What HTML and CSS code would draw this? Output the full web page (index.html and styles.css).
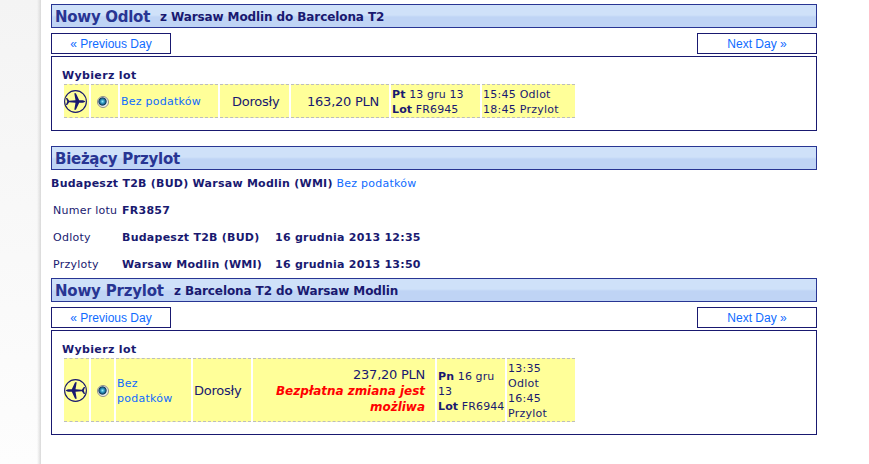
FILE: index.html
```html
<!DOCTYPE html>
<html lang="pl">
<head>
<meta charset="utf-8">
<title>Nowy lot</title>
<link rel="stylesheet" href="styles.css">
</head>
<body>
<svg class="defs" width="0" height="0">
  <symbol id="plane" viewBox="0 0 23 23">
    <circle cx="11.5" cy="11.5" r="10.9" fill="none" stroke="currentColor" stroke-width="1.1"/>
    <path fill="currentColor" d="M21.5 11.5 C20.5 10.5 19 10.2 17.5 10.2 H15.2 L11.9 3.3 H10.3 L11.5 10.2 L5.2 10.8 L3.2 8 H1.9 L3.2 11.5 L1.9 15 H3.2 L5.2 12.2 L11.5 12.8 L10.3 19.7 H11.9 L15.2 12.8 H17.5 C19 12.8 20.5 12.5 21.5 11.5 Z"/>
  </symbol>
</svg>
<main class="page">
  <h2 class="bar"><span class="bar-title">Nowy Odlot</span><span class="bar-route">z Warsaw Modlin do Barcelona T2</span></h2>
  <div class="days"><a class="day">« Previous Day</a><a class="day">Next Day »</a></div>
  <section class="box">
    <h3 class="pick">Wybierz lot</h3>
    <div class="flight outbound">
      <div class="cell icon"><svg class="plane"><use href="#plane"/></svg></div>
      <div class="cell choose"><i class="radio"></i></div>
      <div class="cell"><a class="link">Bez podatków</a></div>
      <div class="cell adult">Dorosły</div>
      <div class="cell price">163,20 PLN</div>
      <div class="cell number"><b>Pt</b> 13 gru 13<br><b>Lot</b> FR6945</div>
      <div class="cell">15:45 Odlot<br>18:45 Przylot</div>
    </div>
  </section>

  <h2 class="bar current"><span class="bar-title">Bieżący Przylot</span></h2>
  <p class="summary"><b>Budapeszt T2B (BUD) Warsaw Modlin (WMI)</b> <a class="link">Bez podatków</a></p>
  <div class="details">
    <span>Numer lotu</span><b>FR3857</b><b></b>
    <span>Odloty</span><b>Budapeszt T2B (BUD)</b><b>16 grudnia 2013 12:35</b>
    <span>Przyloty</span><b>Warsaw Modlin (WMI)</b><b>16 grudnia 2013 13:50</b>
  </div>

  <h2 class="bar"><span class="bar-title title-in">Nowy Przylot</span><span class="bar-route">z Barcelona T2 do Warsaw Modlin</span></h2>
  <div class="days"><a class="day">« Previous Day</a><a class="day">Next Day »</a></div>
  <section class="box tall">
    <h3 class="pick">Wybierz lot</h3>
    <div class="flight inbound">
      <div class="cell icon"><svg class="plane back"><use href="#plane"/></svg></div>
      <div class="cell choose"><i class="radio"></i></div>
      <div class="cell"><a class="link">Bez<br>podatków</a></div>
      <div class="cell adult">Dorosły</div>
      <div class="cell price">237,20 PLN<br><em class="free">Bezpłatna zmiana jest<br>możliwa</em></div>
      <div class="cell number"><b>Pn</b> 16 gru<br>13<br><b>Lot</b> FR6944</div>
      <div class="cell">13:35<br>Odlot<br>16:45<br>Przylot</div>
    </div>
  </section>
</main>
</body>
</html>
```
FILE: styles.css
```css
* { box-sizing: border-box; }
body {
  margin: 0;
  height: 464px;
  overflow: hidden;
  display: flex;
  background: linear-gradient(90deg, transparent 37px, #d9d9d9 41px, #fff 41px), linear-gradient(#f4f4f4, #fdfdfd);
  color: #191970;
  font: 11px/15px Verdana, "DejaVu Sans", sans-serif;
  letter-spacing: .25px;
  white-space: nowrap;
}
.defs { position: absolute; }
.page { width: 766px; margin-left: 51px; padding-top: 4px; }
h2, h3, p { margin: 0; }
.bar {
  display: flex;
  align-items: center;
  height: 24px;
  padding-left: 3px;
  border: 1px solid #283593;
  background: linear-gradient(#cfe1f9 0, #cfe1f9 10px, #bfd4f5 12px);
  font-size: 12px;
}
.bar-title { width: 105px; padding-top: 2px; color: #283593; font-size: 15px; letter-spacing: -.28px; }
.current .bar-title { width: auto; }
.title-in { width: 119px; letter-spacing: -.2px; }
.bar-route { padding-top: 3px; letter-spacing: -.1px; }
.days { display: flex; justify-content: space-between; margin-top: 5px; }
.day {
  width: 120px;
  height: 21px;
  border: 1px solid #191970;
  color: #0f6bff;
  font: 12px/21px "Liberation Sans", Arial, sans-serif;
  letter-spacing: 0;
  text-align: center;
}
.box { height: 75px; margin-top: 2px; padding: 11px 0 0 10px; border: 1px solid #191970; }
.tall { height: 105px; }
.pick { font-size: 11px; line-height: 15px; height: 16px; letter-spacing: .35px; }
.flight { display: grid; gap: 2px; margin-left: 2px; width: 511px; }
.outbound { grid-template-columns: 25px 27px 98px 69px 98px 89px 93px; height: 34px; }
.inbound { grid-template-columns: 25px 23px 75px 58px 182px 68px 68px; height: 64px; }
.cell {
  display: flow-root;
  align-content: center;
  padding: 1px 1px 0;
  background: #ff9;
  border: dashed #bdbdbd;
  border-width: 1px 0;
}
.icon { padding: 0; }
.choose { padding: 1px 0 0 6px; }
.plane { display: block; width: 23px; height: 23px; }
.back { transform: scaleX(-1); }
.radio {
  display: block;
  width: 12px;
  height: 12px;
  border: 1px solid #8e8f8c;
  border-radius: 50%;
  background: radial-gradient(circle at 45% 45%, #9beaf7 0, #2f9cc6 1.8px, #123a5c 3.7px, #eef0f0 4.6px);
}
.link { color: #0f6bff; }
.number { letter-spacing: .12px; }
.inbound .number { padding-top: 2px; }
.adult, .price { font-size: 13px; line-height: 16px; letter-spacing: -.25px; }
.outbound .adult { padding-left: 12px; }
.price { text-align: right; padding-right: 10px; }
.free { color: #f00; font-size: 12px; font-weight: bold; letter-spacing: -.03px; }
.current { margin-top: 15px; }
.summary { height: 27px; padding-top: 6px; }
.details { display: grid; grid-template-columns: 69px 153px 1fr; grid-auto-rows: 27px; align-items: center; padding-left: 2px; }
```
